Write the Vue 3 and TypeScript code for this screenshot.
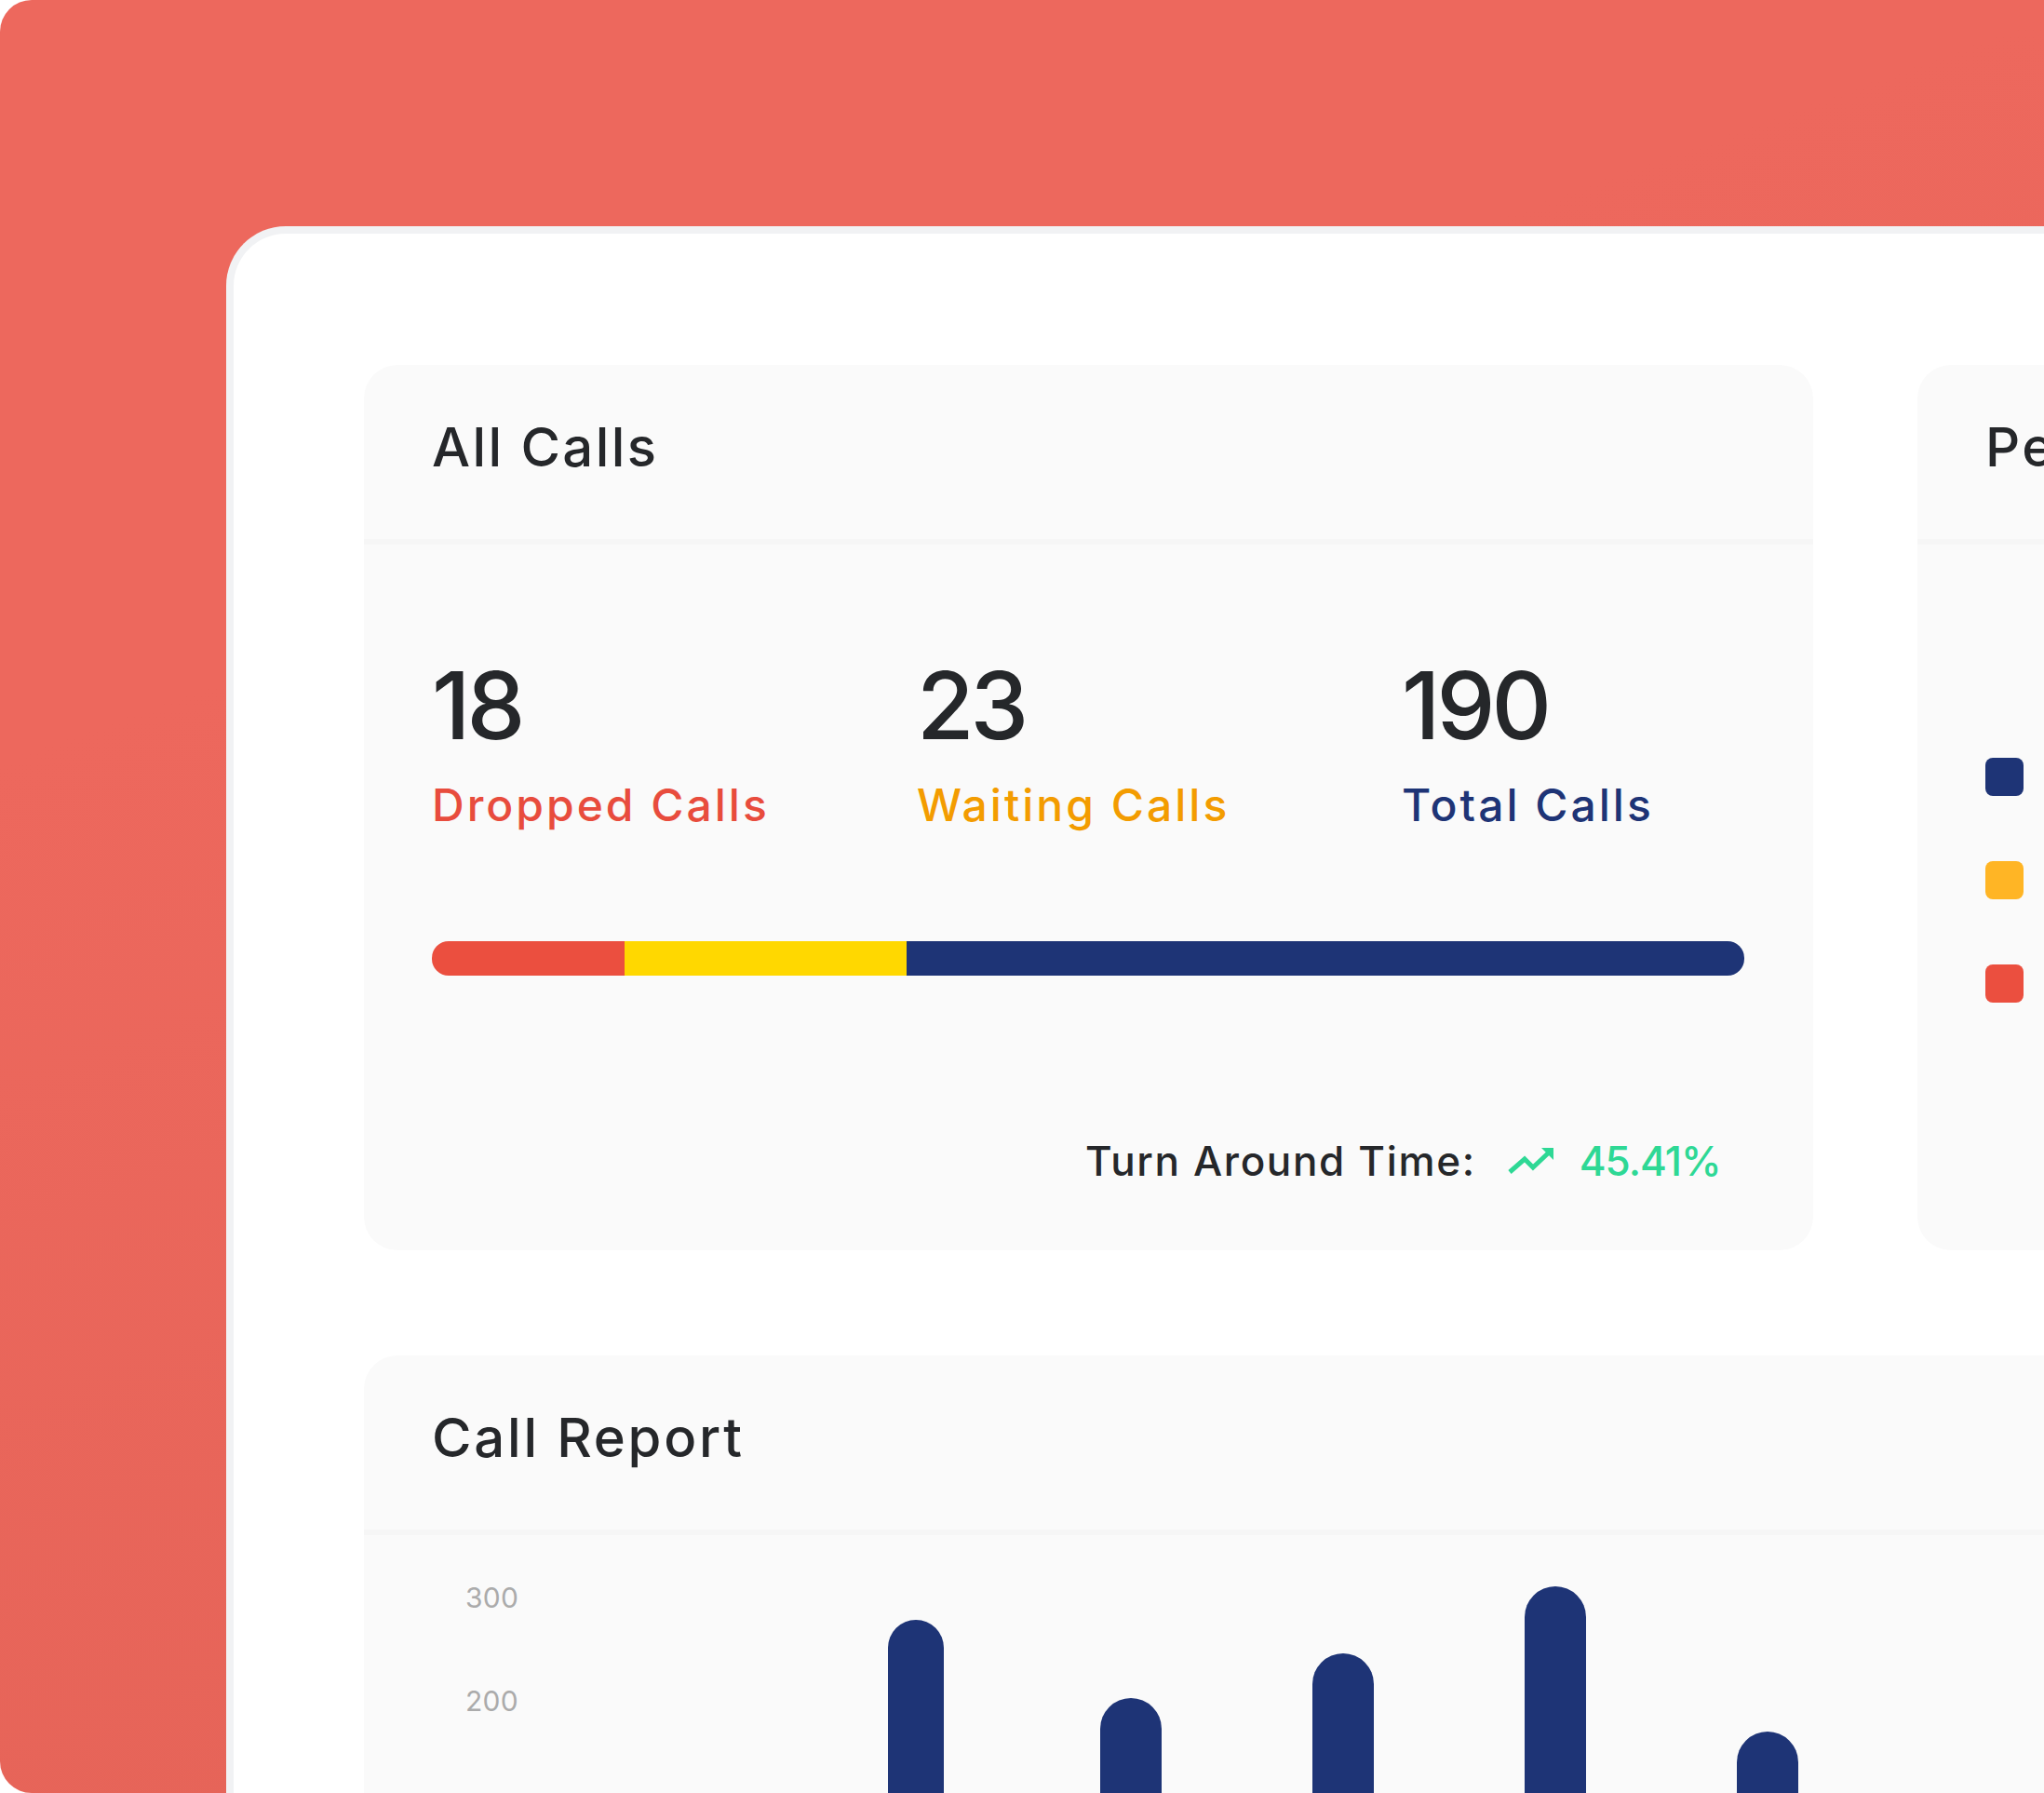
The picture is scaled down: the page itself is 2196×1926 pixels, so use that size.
<script setup lang="ts">
const stats = [
  { value: '18', label: 'Dropped Calls', tone: 'dropped' },
  { value: '23', label: 'Waiting Calls', tone: 'waiting' },
  { value: '190', label: 'Total Calls', tone: 'total' },
]

const legend = ['navy', 'amber', 'red']

// y axis: 111px per 100 calls
const chartBars = [
  { calls: 278, width: 60 },
  { calls: 203, width: 66 },
  { calls: 246, width: 66 },
  { calls: 311, width: 66 },
  { calls: 170, width: 66 },
]
const barHeight = (calls: number) => calls * 1.11 + 'px'
</script>

<template>
  <div class="page">
    <div class="panel">
      <div class="top-row">
        <section class="card">
          <header class="card-head">
            <h2>All Calls</h2>
          </header>
          <div class="stats">
            <div v-for="s in stats" :key="s.label" class="stat">
              <div class="value">{{ s.value }}</div>
              <div class="label" :class="s.tone">{{ s.label }}</div>
            </div>
          </div>
          <div class="progress">
            <span class="seg seg-red"></span>
            <span class="seg seg-yellow"></span>
            <span class="seg seg-navy"></span>
          </div>
          <div class="turnaround">
            <span class="ta-label">Turn Around Time:</span>
            <svg class="trend" width="50" height="30" viewBox="0 0 50 30">
              <path d="M3 27 L19 13 L28 22 L45 6" fill="none" stroke="#2ed895" stroke-width="5" />
              <path d="M37 1 H50 V14 Z" fill="#2ed895" />
            </svg>
            <span class="ta-value">45.41%</span>
          </div>
        </section>

        <section class="card card-side">
          <header class="card-head">
            <h2>Performance</h2>
          </header>
          <ul class="legend">
            <li v-for="c in legend" :key="c" class="swatch" :class="c"></li>
          </ul>
        </section>
      </div>

      <section class="card card-report">
        <header class="card-head">
          <h2>Call Report</h2>
        </header>
        <div class="chart">
          <div class="axis">
            <span>300</span>
            <span>200</span>
          </div>
          <div class="bars">
            <div
              v-for="(b, i) in chartBars"
              :key="i"
              class="bar"
              :style="{ height: barHeight(b.calls), width: b.width + 'px' }"
            ></div>
          </div>
        </div>
      </section>
    </div>
  </div>
</template>

<style>
html,
body {
  margin: 0;
  background: #fff;
}
</style>

<style scoped>
.page {
  width: 2196px;
  height: 1926px;
  overflow: hidden;
  box-sizing: border-box;
  padding: 243px 0 0 243px;
  background: linear-gradient(160deg, #ed685d 30%, #e26256 100%);
  border-radius: 34px 0 0 34px;
  font-family: Inter, 'Liberation Sans', sans-serif;
  color: #25272a;
}

.panel {
  box-sizing: border-box;
  width: 2100px;
  height: 2000px;
  padding: 141px 0 0 140px;
  background: #fff;
  border-left: 8px solid #f1f2f4;
  border-top: 8px solid #f1f2f4;
  border-radius: 64px 0 0 0;
}

.top-row {
  display: flex;
  gap: 112px;
}

.card {
  box-sizing: border-box;
  background: #fafafa;
  border-radius: 36px;
}

.top-row .card {
  width: 1557px;
  height: 951px;
  flex: none;
}

.top-row .card-side {
  width: 600px;
}

.card-report {
  margin-top: 113px;
  width: 1900px;
  height: 800px;
}

.card-head {
  box-sizing: border-box;
  height: 193px;
  padding: 54px 0 0 73px;
  border-bottom: 6px solid #f6f6f6;
}

.card-head h2 {
  margin: 0;
  font-size: 58px;
  line-height: 68px;
  font-weight: 500;
  letter-spacing: 2.4px;
  white-space: nowrap;
}

.card-report .card-head h2 {
  letter-spacing: 2.8px;
}

.stats {
  display: grid;
  grid-template-columns: repeat(3, 521px);
  padding: 118px 0 0 73px;
}

.value {
  font-size: 100px;
  line-height: 110px;
  font-weight: 500;
  letter-spacing: -4px;
}

.label {
  margin-top: 23px;
  font-size: 48px;
  line-height: 58px;
  font-weight: 500;
  letter-spacing: 3px;
}

.dropped { color: #e84c3d; }
.waiting { color: #f39c00; }
.total { color: #1e3476; }

.progress {
  display: flex;
  height: 37px;
  width: 1410px;
  margin: 117px 0 0 73px;
  border-radius: 18px;
  overflow: hidden;
}

.seg { display: block; }
.seg-red { width: 207px; background: #eb4f3f; }
.seg-yellow { width: 303px; background: #ffd800; }
.seg-navy { flex: 1; background: #1e3476; }

.turnaround {
  display: flex;
  align-items: center;
  margin: 172px 0 0 775px;
  font-size: 44px;
  line-height: 54px;
  font-weight: 500;
}

.ta-label { letter-spacing: 1.65px; }

.trend {
  margin: 0 28px 0 33px;
  flex: none;
}

.ta-value {
  color: #2ed895;
  letter-spacing: -1px;
}

.legend {
  list-style: none;
  margin: 0;
  padding: 229px 0 0 73px;
  display: flex;
  flex-direction: column;
  gap: 70px;
}

.swatch {
  width: 41px;
  height: 41px;
  border-radius: 8px;
}

.swatch.navy { background: #1e3476; }
.swatch.amber { background: #ffb525; }
.swatch.red { background: #eb4f3f; }

.chart {
  position: relative;
  height: 400px;
}

.axis {
  position: absolute;
  left: 109px;
  top: 49px;
  display: flex;
  flex-direction: column;
  gap: 75px;
  font-size: 30px;
  line-height: 36px;
  color: #ababab;
  letter-spacing: 0.3px;
}

.bars {
  position: absolute;
  left: 563px;
  bottom: 0;
  top: 0;
  display: flex;
  align-items: flex-end;
  gap: 162px;
}

.bar {
  flex: none;
  background: #1e3476;
  border-radius: 33px 33px 0 0;
}

.bar:first-child {
  margin-right: 6px;
  border-radius: 30px 30px 0 0;
}
</style>
